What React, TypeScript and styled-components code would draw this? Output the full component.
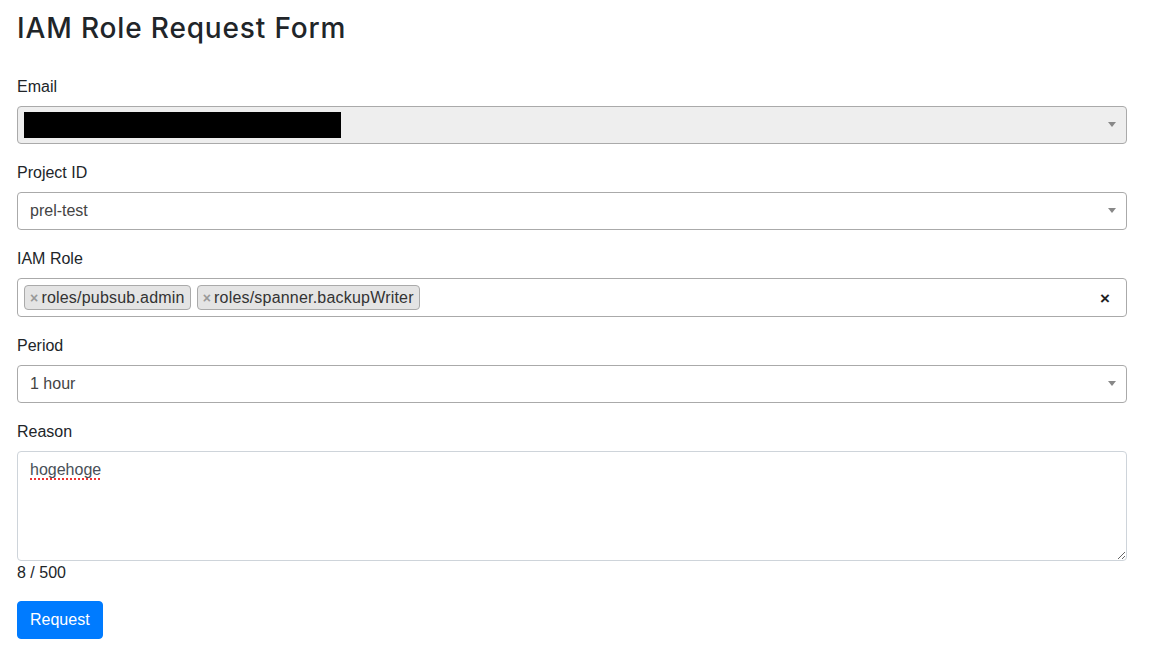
import React from "react";
import styled, { createGlobalStyle } from "styled-components";

const Global = createGlobalStyle`
  html, body { margin: 0; padding: 0; background: #fff; }
  body {
    font-family: "Liberation Sans", Arial, sans-serif;
    font-size: 16px;
    line-height: 1.5;
    color: #212529;
  }
  * { box-sizing: border-box; }
`;

const Page = styled.div`
  width: 1144px;
  padding: 11px 17px 0 17px;
`;

const Title = styled.h3`
  margin: 0 0 29px 0;
  font-family: Inter, "Liberation Sans", sans-serif;
  font-size: 28px;
  font-weight: 500;
  letter-spacing: 0.85px;
  line-height: 34px;
  color: #212529;
`;

const Form = styled.form`
  display: flex;
  flex-direction: column;
`;

const Group = styled.div<{ $mb?: number }>`
  display: flex;
  flex-direction: column;
  margin-bottom: ${(p) => (p.$mb ?? 16)}px;
`;

const Label = styled.label`
  display: block;
  margin-bottom: 8px;
  line-height: 24px;
  height: 24px;
  padding-top: 1px;
`;

const SelectBox = styled.div<{ $disabled?: boolean }>`
  position: relative;
  display: flex;
  align-items: center;
  height: 38px;
  width: 1110px;
  border: 1px solid #aaa;
  border-radius: 4px;
  background: ${(p) => (p.$disabled ? "#eee" : "#fff")};
  padding: 0 30px 0 12px;
  color: #444;
`;

const Arrow = styled.span`
  position: absolute;
  right: 10px;
  top: 50%;
  margin-top: -3px;
  width: 0;
  height: 0;
  border-left: 4px solid transparent;
  border-right: 4px solid transparent;
  border-top: 5px solid #888;
`;

const Redacted = styled.div`
  width: 317px;
  height: 26px;
  background: #000;
  margin-left: -6px;
`;

const MultiBox = styled.div`
  display: flex;
  align-items: center;
  gap: 6px;
  height: 39px;
  width: 1110px;
  border: 1px solid #aaa;
  border-radius: 4px;
  background: #fff;
  padding: 0 12px 0 6px;
  position: relative;
`;

const Tag = styled.span`
  display: inline-flex;
  align-items: center;
  height: 25px;
  padding: 0 5px 0 5px;
  background: #e4e4e4;
  border: 1px solid #aaa;
  border-radius: 4px;
  color: #333;
  font-size: 16px;
  letter-spacing: 0.2px;
  line-height: 23px;
`;

const TagX = styled.span`
  color: #999;
  font-weight: 700;
  font-size: 14px;
  margin-right: 3px;
  line-height: 1;
`;

const Clear = styled.span`
  position: absolute;
  right: 16px;
  top: 50%;
  transform: translateY(-50%);
  font-weight: 700;
  font-size: 17px;
  color: #222;
  line-height: 1;
`;

const TextArea = styled.div`
  width: 1110px;
  height: 110px;
  border: 1px solid #ced4da;
  border-radius: 4px;
  padding: 6px 12px;
  color: #495057;
  resize: vertical;
  overflow: auto;
`;

const Misspelled = styled.span`
  text-decoration: underline dotted #e33;
  text-decoration-thickness: 2px;
  text-underline-offset: 3px;
`;

const Counter = styled.div`
  line-height: 24px;
  color: #212529;
`;

const Button = styled.button`
  margin-top: 16px;
  align-self: flex-start;
  height: 38px;
  padding: 0 12px;
  background: #007bff;
  border: 1px solid #007bff;
  border-radius: 4px;
  color: #fff;
  font-family: inherit;
  font-size: 16px;
  line-height: 24px;
  cursor: pointer;
`;

export default function App() {
  return (
    <>
      <Global />
      <Page>
        <Title>IAM Role Request Form</Title>
        <Form onSubmit={(e) => e.preventDefault()}>
          <Group>
            <Label>Email</Label>
            <SelectBox $disabled>
              <Redacted />
              <Arrow />
            </SelectBox>
          </Group>
          <Group>
            <Label>Project ID</Label>
            <SelectBox>
              prel-test
              <Arrow />
            </SelectBox>
          </Group>
          <Group>
            <Label>IAM Role</Label>
            <MultiBox>
              <Tag>
                <TagX>×</TagX>roles/pubsub.admin
              </Tag>
              <Tag>
                <TagX>×</TagX>roles/spanner.backupWriter
              </Tag>
              <Clear>×</Clear>
            </MultiBox>
          </Group>
          <Group>
            <Label>Period</Label>
            <SelectBox>
              1 hour
              <Arrow />
            </SelectBox>
          </Group>
          <Group $mb={0}>
            <Label>Reason</Label>
            <TextArea>
              <Misspelled>hogehoge</Misspelled>
            </TextArea>
            <Counter>8 / 500</Counter>
          </Group>
          <Button type="submit">Request</Button>
        </Form>
      </Page>
    </>
  );
}
